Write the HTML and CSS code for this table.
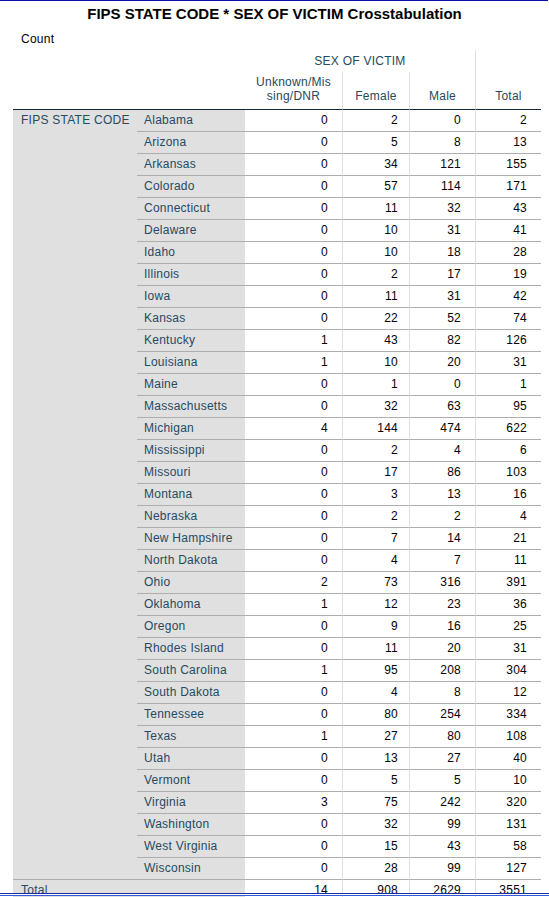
FILE: index.html
```html
<!DOCTYPE html>
<html lang="en">
<head>
<meta charset="utf-8">
<title>FIPS STATE CODE * SEX OF VICTIM Crosstabulation</title>
<link rel="stylesheet" href="styles.css">
</head>
<body>
<div class="frame-top"></div>
<h1 class="title">FIPS STATE CODE * SEX OF VICTIM Crosstabulation</h1>
<div class="caption">Count</div>
<table class="xtab">
  <colgroup>
    <col class="c1"><col class="c2"><col class="c3"><col class="c4"><col class="c5"><col class="c6">
  </colgroup>
  <thead>
    <tr class="h1">
      <th class="corner" colspan="2" rowspan="2"></th>
      <th class="span" colspan="3">SEX OF VICTIM</th>
      <th class="tot" rowspan="2">Total</th>
    </tr>
    <tr class="h2">
      <th class="sub first">Unknown/Mis<br>sing/DNR</th>
      <th class="sub">Female</th>
      <th class="sub">Male</th>
    </tr>
  </thead>
  <tbody>
    <tr><td class="stub" rowspan="35">FIPS STATE CODE</td><td class="lab">Alabama</td><td class="n n3">0</td><td class="n n4">2</td><td class="n n5">0</td><td class="n n6">2</td></tr>
    <tr><td class="lab">Arizona</td><td class="n n3">0</td><td class="n n4">5</td><td class="n n5">8</td><td class="n n6">13</td></tr>
    <tr><td class="lab">Arkansas</td><td class="n n3">0</td><td class="n n4">34</td><td class="n n5">121</td><td class="n n6">155</td></tr>
    <tr><td class="lab">Colorado</td><td class="n n3">0</td><td class="n n4">57</td><td class="n n5">114</td><td class="n n6">171</td></tr>
    <tr><td class="lab">Connecticut</td><td class="n n3">0</td><td class="n n4">11</td><td class="n n5">32</td><td class="n n6">43</td></tr>
    <tr><td class="lab">Delaware</td><td class="n n3">0</td><td class="n n4">10</td><td class="n n5">31</td><td class="n n6">41</td></tr>
    <tr><td class="lab">Idaho</td><td class="n n3">0</td><td class="n n4">10</td><td class="n n5">18</td><td class="n n6">28</td></tr>
    <tr><td class="lab">Illinois</td><td class="n n3">0</td><td class="n n4">2</td><td class="n n5">17</td><td class="n n6">19</td></tr>
    <tr><td class="lab">Iowa</td><td class="n n3">0</td><td class="n n4">11</td><td class="n n5">31</td><td class="n n6">42</td></tr>
    <tr><td class="lab">Kansas</td><td class="n n3">0</td><td class="n n4">22</td><td class="n n5">52</td><td class="n n6">74</td></tr>
    <tr><td class="lab">Kentucky</td><td class="n n3">1</td><td class="n n4">43</td><td class="n n5">82</td><td class="n n6">126</td></tr>
    <tr><td class="lab">Louisiana</td><td class="n n3">1</td><td class="n n4">10</td><td class="n n5">20</td><td class="n n6">31</td></tr>
    <tr><td class="lab">Maine</td><td class="n n3">0</td><td class="n n4">1</td><td class="n n5">0</td><td class="n n6">1</td></tr>
    <tr><td class="lab">Massachusetts</td><td class="n n3">0</td><td class="n n4">32</td><td class="n n5">63</td><td class="n n6">95</td></tr>
    <tr><td class="lab">Michigan</td><td class="n n3">4</td><td class="n n4">144</td><td class="n n5">474</td><td class="n n6">622</td></tr>
    <tr><td class="lab">Mississippi</td><td class="n n3">0</td><td class="n n4">2</td><td class="n n5">4</td><td class="n n6">6</td></tr>
    <tr><td class="lab">Missouri</td><td class="n n3">0</td><td class="n n4">17</td><td class="n n5">86</td><td class="n n6">103</td></tr>
    <tr><td class="lab">Montana</td><td class="n n3">0</td><td class="n n4">3</td><td class="n n5">13</td><td class="n n6">16</td></tr>
    <tr><td class="lab">Nebraska</td><td class="n n3">0</td><td class="n n4">2</td><td class="n n5">2</td><td class="n n6">4</td></tr>
    <tr><td class="lab">New Hampshire</td><td class="n n3">0</td><td class="n n4">7</td><td class="n n5">14</td><td class="n n6">21</td></tr>
    <tr><td class="lab">North Dakota</td><td class="n n3">0</td><td class="n n4">4</td><td class="n n5">7</td><td class="n n6">11</td></tr>
    <tr><td class="lab">Ohio</td><td class="n n3">2</td><td class="n n4">73</td><td class="n n5">316</td><td class="n n6">391</td></tr>
    <tr><td class="lab">Oklahoma</td><td class="n n3">1</td><td class="n n4">12</td><td class="n n5">23</td><td class="n n6">36</td></tr>
    <tr><td class="lab">Oregon</td><td class="n n3">0</td><td class="n n4">9</td><td class="n n5">16</td><td class="n n6">25</td></tr>
    <tr><td class="lab">Rhodes Island</td><td class="n n3">0</td><td class="n n4">11</td><td class="n n5">20</td><td class="n n6">31</td></tr>
    <tr><td class="lab">South Carolina</td><td class="n n3">1</td><td class="n n4">95</td><td class="n n5">208</td><td class="n n6">304</td></tr>
    <tr><td class="lab">South Dakota</td><td class="n n3">0</td><td class="n n4">4</td><td class="n n5">8</td><td class="n n6">12</td></tr>
    <tr><td class="lab">Tennessee</td><td class="n n3">0</td><td class="n n4">80</td><td class="n n5">254</td><td class="n n6">334</td></tr>
    <tr><td class="lab">Texas</td><td class="n n3">1</td><td class="n n4">27</td><td class="n n5">80</td><td class="n n6">108</td></tr>
    <tr><td class="lab">Utah</td><td class="n n3">0</td><td class="n n4">13</td><td class="n n5">27</td><td class="n n6">40</td></tr>
    <tr><td class="lab">Vermont</td><td class="n n3">0</td><td class="n n4">5</td><td class="n n5">5</td><td class="n n6">10</td></tr>
    <tr><td class="lab">Virginia</td><td class="n n3">3</td><td class="n n4">75</td><td class="n n5">242</td><td class="n n6">320</td></tr>
    <tr><td class="lab">Washington</td><td class="n n3">0</td><td class="n n4">32</td><td class="n n5">99</td><td class="n n6">131</td></tr>
    <tr><td class="lab">West Virginia</td><td class="n n3">0</td><td class="n n4">15</td><td class="n n5">43</td><td class="n n6">58</td></tr>
    <tr><td class="lab">Wisconsin</td><td class="n n3">0</td><td class="n n4">28</td><td class="n n5">99</td><td class="n n6">127</td></tr>
    <tr class="total"><td class="stub tlab" colspan="2">Total</td><td class="n n3">14</td><td class="n n4">908</td><td class="n n5">2629</td><td class="n n6">3551</td></tr>
  </tbody>
</table>
<div class="frame-bottom"></div>
</body>
</html>
```

FILE: styles.css
```css
html, body {
  margin: 0;
  padding: 0;
  background: #ffffff;
}
body {
  font-family: "Liberation Sans", Arial, sans-serif;
  font-size: 12px;
  color: #264a60;
}
.frame-top {
  height: 1px;
  background: #0c0ca8;
  margin-right: 1px;
}
.title {
  margin: 4px 0 0 0;
  font-size: 15px;
  line-height: 17px;
  font-weight: bold;
  color: #010205;
  text-align: center;
}
.caption {
  margin-top: 10px;
  padding-left: 21px;
  line-height: 14px;
  color: #010205;
  letter-spacing: 0.25px;
}
.xtab {
  margin: 4px 0 0 13px;
  border-collapse: separate;
  border-spacing: 0;
  table-layout: fixed;
  width: 528px;
  letter-spacing: 0.25px;
}
.c1 { width: 124px; }
.c2 { width: 108px; }
.c3 { width: 97px; }
.c4 { width: 67px; }
.c5 { width: 66px; }
.c6 { width: 66px; }
.xtab th {
  font-weight: normal;
  color: #264a60;
  padding: 0;
}
.h1 th {
  height: 22px;
  line-height: 22px;
}
.h1 .span {
  text-align: center;
  vertical-align: middle;
}
.h1 .tot {
  border-left: 1px solid #e0e0e0;
  border-bottom: 1px solid #152935;
  vertical-align: bottom;
  text-align: center;
  line-height: 14px;
  padding: 0 0 6px 0;
}
.h1 .corner {
  border-bottom: 1px solid #152935;
}
.h2 th {
  height: 28px;
  line-height: 14px;
  vertical-align: bottom;
  text-align: center;
  padding: 3px 0 6px 0;
  border-bottom: 1px solid #152935;
}
.h2 .sub {
  border-left: 1px solid #e0e0e0;
}
.h2 .sub.first {
  border-left: none;
}
.xtab td {
  padding: 0;
  height: 21px;
  line-height: 21px;
  border-bottom: 1px solid #aeaeae;
  white-space: nowrap;
}
.xtab td.stub {
  background: #e0e0e0;
  vertical-align: top;
  padding-left: 8px;
  color: #264a60;
}
.xtab td.lab {
  background: #e0e0e0;
  padding-left: 7px;
  color: #264a60;
}
.xtab td.n {
  text-align: right;
  color: #010205;
}
.xtab td.n3 { padding-right: 14px; }
.xtab td.n4 { padding-right: 11px; border-left: 1px solid #e0e0e0; }
.xtab td.n5 { padding-right: 14px; border-left: 1px solid #e0e0e0; }
.xtab td.n6 { padding-right: 14px; border-left: 1px solid #e0e0e0; }
.total td { border-bottom: none; }
.frame-bottom {
  position: fixed;
  left: 0;
  right: 0;
  top: 893px;
  height: 3px;
  border-top: 1px solid #1c2a9c;
  border-bottom: 1px solid #3558d8;
  box-sizing: border-box;
  background: #ffffff;
}
```
